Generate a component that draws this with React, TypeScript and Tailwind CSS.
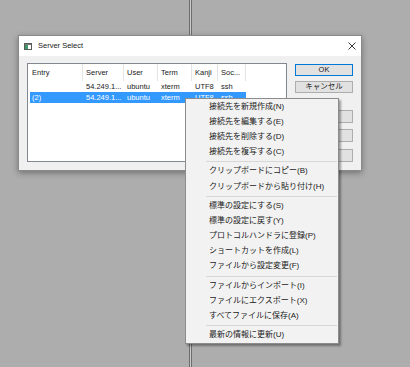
const ui = "font-['Liberation_Sans','Noto_Sans_CJK_JP',sans-serif]"

const columns = [
  { name: 'Entry', w: 'w-[55px]', pl: 'pl-[4px]' },
  { name: 'Server', w: 'w-[41px]', pl: 'pl-[3px]' },
  { name: 'User', w: 'w-[34px]', pl: 'pl-[3px]' },
  { name: 'Term', w: 'w-[34px]', pl: 'pl-[3px]' },
  { name: 'Kanji', w: 'w-[26px]', pl: 'pl-[3px]' },
  { name: 'Soc...', w: 'w-[28px]', pl: 'pl-[3px]' },
]

const cellCls = [
  'w-[53px] pl-[2px]',
  'w-[41px] pl-[3px]',
  'w-[34px] pl-[3px]',
  'w-[34px] pl-[3px]',
  'w-[26px] pl-[3px]',
  'w-[28px] pl-[3px]',
]

const rows = [
  { cells: ['', '54.249.1...', 'ubuntu', 'xterm', 'UTF8', 'ssh'], selected: false },
  { cells: ['(2)', '54.249.1...', 'ubuntu', 'xterm', 'UTF8', 'ssh'], selected: true },
]

// null = separator
const menu: (string | null)[] = [
  '接続先を新規作成(N)',
  '接続先を編集する(E)',
  '接続先を削除する(D)',
  '接続先を複写する(C)',
  null,
  'クリップボードにコピー(B)',
  'クリップボードから貼り付け(H)',
  null,
  '標準の設定にする(S)',
  '標準の設定に戻す(Y)',
  'プロトコルハンドラに登録(P)',
  'ショートカットを作成(L)',
  'ファイルから設定変更(F)',
  null,
  'ファイルからインポート(I)',
  'ファイルにエクスポート(X)',
  'すべてファイルに保存(A)',
  null,
  '最新の情報に更新(U)',
]

function TitleIcon() {
  return (
    <svg width="8" height="7" viewBox="0 0 8 7">
      <rect x="0.5" y="0.5" width="7" height="6" fill="#fff" stroke="#5a5a5a" />
      <rect x="1" y="1" width="6" height="1" fill="#7a7a7a" />
      <rect x="1" y="2" width="3" height="4" fill="#3b9a6a" />
    </svg>
  )
}

function Dialog() {
  return (
    <div className="absolute left-[18px] top-[35px] flex h-[136px] w-[344px] flex-col border border-[#8a8a8a] bg-[#f0f0f0] shadow-[0_2px_6px_rgba(0,0,0,0.35)]">
      <div className="flex h-[20px] items-center bg-white pl-[5px]">
        <TitleIcon />
        <span className="ml-[6px] text-[7.5px] text-[#1a1a1a]">Server Select</span>
        <svg className="ml-auto mr-[5px]" width="8" height="8" viewBox="0 0 8 8">
          <path d="M0.5 0.5 L7.5 7.5 M7.5 0.5 L0.5 7.5" stroke="#222" strokeWidth="0.9" />
        </svg>
      </div>
      <div className="flex gap-[8px] pl-[8px] pt-[7px]">
        <div className="flex h-[99px] w-[260px] flex-col border border-[#828790] bg-white text-[7.5px] text-[#1a1a1a]">
          <div className="flex h-[17px] items-center">
            {columns.map((c) => (
              <div
                key={c.name}
                className={`flex h-full items-center border-r border-[#e5e5e5] ${c.w} ${c.pl}`}
              >
                {c.name}
              </div>
            ))}
          </div>
          {rows.map((r, i) => (
            <div
              key={i}
              className={`ml-[2px] flex h-[11px] w-[216px] items-center leading-[11px] ${
                r.selected ? 'bg-[#3399ff] text-white' : ''
              }`}
            >
              {r.cells.map((t, j) => (
                <div key={j} className={`whitespace-nowrap ${cellCls[j]}`}>
                  {t}
                </div>
              ))}
            </div>
          ))}
        </div>
        <div className="flex w-[58px] flex-col pt-[1px] text-[7.5px] text-[#1a1a1a]">
          <div className="flex h-[12px] items-center justify-center border border-[#0078d7] bg-[#e1e1e1]">
            OK
          </div>
          <div className="mt-[5px] flex h-[12px] items-center justify-center border border-[#adadad] bg-[#e1e1e1]">
            キャンセル
          </div>
          <div className="mt-[17px] h-[13px] border border-[#adadad] bg-[#e1e1e1]" />
          <div className="mt-[6px] h-[13px] border border-[#adadad] bg-[#e1e1e1]" />
          <div className="mt-[7px] h-[13px] border border-[#adadad] bg-[#e1e1e1]" />
        </div>
      </div>
    </div>
  )
}

function ContextMenu() {
  return (
    <div className="absolute left-[185px] top-[98px] flex h-[246px] w-[154px] flex-col border border-[#8c8c8c] bg-[#f2f2f2] text-[8px] text-[#1a1a1a] shadow-[2px_2px_2px_rgba(0,0,0,0.35)]">
      {menu.map((item, i) =>
        item === null ? (
          <div key={i} className="flex h-[4px] shrink-0 items-center pl-[20px] pr-[1px]">
            <div className="h-px w-full bg-[#d7d7d7]" />
          </div>
        ) : (
          <div key={i} className="flex h-[15.2px] shrink-0 items-center whitespace-nowrap pl-[23px]">
            {item}
          </div>
        ),
      )}
    </div>
  )
}

export default function App() {
  return (
    <div className={`relative h-[367px] w-[410px] overflow-hidden bg-[#adadad] ${ui}`}>
      <div className="absolute left-[189px] top-0 h-full w-[3px] border-x border-[#6e6e6e] bg-[#c9c9c9]" />
      <Dialog />
      <ContextMenu />
    </div>
  )
}
